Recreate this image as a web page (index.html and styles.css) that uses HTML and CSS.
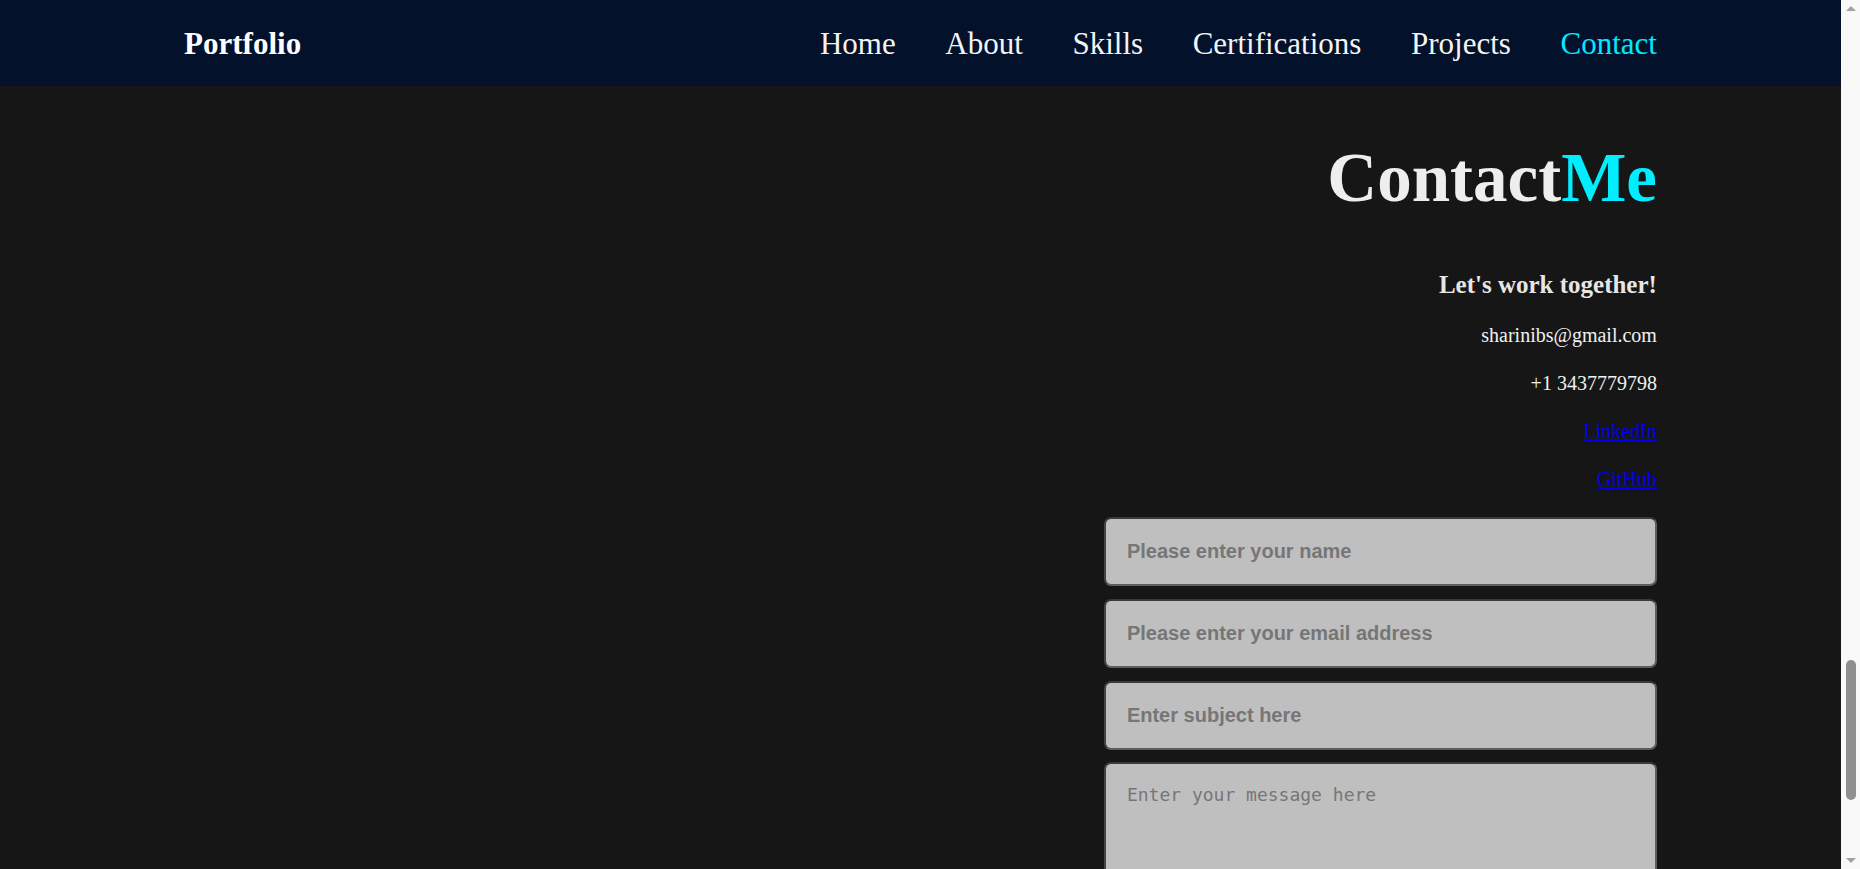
FILE: index.html
```html
<!DOCTYPE html>
<html lang="en">
<head>
<meta charset="utf-8">
<title>Portfolio - Contact</title>
<link rel="stylesheet" href="styles.css">
</head>
<body>
<div class="page">
  <div class="viewport">
    <header class="nav">
      <div class="nav-inner">
        <a class="logo" href="#">Portfolio</a>
        <nav class="links">
          <a href="#">Home</a>
          <a href="#">About</a>
          <a href="#">Skills</a>
          <a href="#">Certifications</a>
          <a href="#">Projects</a>
          <a class="active" href="#">Contact</a>
        </nav>
      </div>
    </header>
    <main class="contact">
      <div class="contact-inner">
        <h1 class="title">Contact<span class="accent">Me</span></h1>
        <h3 class="subtitle">Let's work together!</h3>
        <p class="info">sharinibs@gmail.com</p>
        <p class="info">+1 3437779798</p>
        <p class="info"><a href="#">LinkedIn</a></p>
        <p class="info"><a href="#">GitHub</a></p>
        <form class="form">
          <input class="field" type="text" placeholder="Please enter your name">
          <input class="field" type="email" placeholder="Please enter your email address">
          <input class="field" type="text" placeholder="Enter subject here">
          <textarea class="field area" placeholder="Enter your message here"></textarea>
        </form>
      </div>
    </main>
  </div>
  <div class="scrollbar">
    <div class="sb-btn"><span class="arrow-up"></span></div>
    <div class="sb-track"><div class="sb-thumb"></div></div>
    <div class="sb-btn"><span class="arrow-down"></span></div>
  </div>
</div>
</body>
</html>
```
FILE: styles.css
```css
html, body {
  margin: 0;
  padding: 0;
  height: 100%;
  overflow: hidden;
  background: #161616;
  font-family: "Liberation Serif", "Times New Roman", serif;
}

.page {
  display: flex;
  height: 100vh;
}

.viewport {
  flex: 1;
  min-width: 0;
  overflow: hidden;
  background: #161616;
}

.nav {
  height: 86px;
  background: #03112a;
}

.nav-inner {
  width: 80%;
  height: 100%;
  margin: 0 auto;
  display: flex;
  align-items: center;
  justify-content: space-between;
}

.logo {
  color: #ffffff;
  font-weight: bold;
  font-size: 31px;
  line-height: 31px;
  text-decoration: none;
}

.links {
  display: flex;
  gap: 49.6px;
}

.links a {
  color: #f4f4f4;
  font-size: 31px;
  line-height: 31px;
  text-decoration: none;
}

.links a.active {
  color: #00eaff;
}

.contact-inner {
  width: 80%;
  margin: 0 auto;
  text-align: right;
  color: #eeeeee;
}

.title {
  margin: 58px 0 0;
  font-size: 69px;
  line-height: 69px;
  font-weight: bold;
  color: #eeeeee;
}

.accent {
  color: #00eeff;
}

.subtitle {
  margin: 59px 0 24px;
  font-size: 25px;
  line-height: 25px;
  font-weight: bold;
  color: #e6e6e6;
}

.info {
  margin: 20px 0;
  font-size: 20px;
  line-height: 28px;
  color: #f0f0f0;
}

.info a {
  color: #0000ee;
}

.form {
  width: 553px;
  margin: 24px 0 0 auto;
  text-align: left;
}

.field {
  display: block;
  box-sizing: border-box;
  width: 100%;
  height: 69px;
  margin: 0 0 13px;
  padding: 0 21px;
  background: #bfbfbf;
  border: 2px solid #5e5e5e;
  border-top-color: #3a3a3a;
  border-left-color: #444444;
  border-radius: 7px;
  font-family: "Liberation Sans", Arial, sans-serif;
  font-weight: bold;
  font-size: 20px;
  color: #333;
  outline: none;
}

.field::placeholder {
  color: #767676;
  opacity: 1;
}

.area {
  height: 200px;
  margin-top: -1px;
  padding: 20px 21px;
  resize: none;
  font-family: "DejaVu Sans Mono", "Liberation Mono", monospace;
  font-weight: normal;
  font-size: 18px;
}

.scrollbar {
  width: 19px;
  flex: none;
  display: flex;
  flex-direction: column;
  background: #f9f9f9;
}

.sb-btn {
  height: 17px;
  display: flex;
  align-items: center;
  justify-content: center;
  flex: none;
}

.arrow-up {
  width: 0;
  height: 0;
  border-left: 5px solid transparent;
  border-right: 5px solid transparent;
  border-bottom: 5px solid #a3a3a3;
}

.arrow-down {
  width: 0;
  height: 0;
  border-left: 5px solid transparent;
  border-right: 5px solid transparent;
  border-top: 5px solid #a3a3a3;
}

.sb-track {
  flex: 1;
  padding-top: 643px;
}

.sb-thumb {
  width: 10px;
  height: 140px;
  margin: 0 auto;
  border-radius: 5px;
  background: #8f8f8f;
}
```
